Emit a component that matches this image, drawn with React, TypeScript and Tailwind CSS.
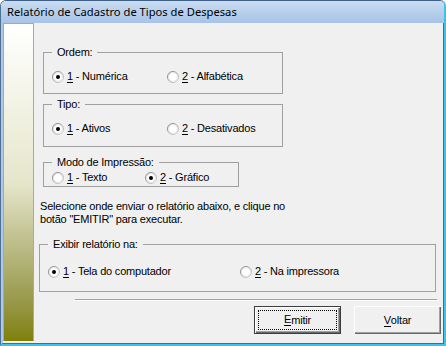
import React from "react";

function Radio({ checked }: { checked?: boolean }) {
  return (
    <svg width="12" height="12" viewBox="0 0 12 12" className="shrink-0">
      <defs>
        <linearGradient id="rg" x1="0" y1="0" x2="1" y2="1">
          <stop offset="0" stopColor="#7a7a7a" />
          <stop offset="1" stopColor="#d8d8d8" />
        </linearGradient>
      </defs>
      <circle cx="6" cy="6" r="5.5" fill="#f4f4f4" stroke="url(#rg)" />
      <circle cx="6" cy="6" r="4.3" fill="#ffffff" stroke="#e4e4e4" strokeWidth="0.8" />
      {checked && <circle cx="6" cy="6" r="2" fill="#000" />}
    </svg>
  );
}

function Opt({ n, label, checked, w }: { n: string; label: string; checked?: boolean; w?: string }) {
  return (
    <div className={`flex items-center h-[13px] ${w ?? ""}`}>
      <Radio checked={checked} />
      <span className="ml-[3px] whitespace-nowrap">
        <u className="no-underline border-b border-black leading-[11px] inline-block">{n}</u>
        {" - " + label}
      </span>
    </div>
  );
}

export default function App() {
  return (
    <div className="w-[446px] h-[346px] flex flex-col overflow-hidden rounded-t-[6px] border-t border-l border-t-[#3d5f86] border-l-[#4f6f95] border-r-2 border-b-2 border-r-[#3ec3e6] border-b-[#3ec3e6] font-['Liberation_Sans',Arial,sans-serif] text-[11px] tracking-[-0.2px] text-black">
      <div className="h-[22px] shrink-0 flex items-center pl-[6px] bg-gradient-to-b from-[#cadcf1] to-[#a7c3e6] font-['Noto_Sans',sans-serif] text-[11.2px] tracking-normal text-black">
        Relatório de Cadastro de Tipos de Despesas
      </div>
      <div className="flex-1 flex bg-[#f0f0f0] border-l-2 border-l-[#aec8e8] border-r border-r-[#646464] border-b border-b-[#646464]">
        <div className="w-[31px] mb-[2px] border-l border-r border-t border-[#a8a8a8] bg-gradient-to-b from-[#ffffff] via-[#e6e6cc] to-[#808000]" />
        <div className="flex-1 flex flex-col">
          <fieldset className="ml-[9px] mt-[23px] w-[240px] border border-[#a0a0a0] pl-[8px] pt-[11px] pb-[10px] flex">
            <legend className="px-[5px] leading-[13px]">Ordem:</legend>
            <Opt n="1" label="Numérica" checked w="w-[115px]" />
            <Opt n="2" label="Alfabética" />
          </fieldset>
          <fieldset className="ml-[9px] mt-[4px] w-[240px] border border-[#a0a0a0] pl-[8px] pt-[11px] pb-[11px] flex">
            <legend className="px-[5px] leading-[13px]">Tipo:</legend>
            <Opt n="1" label="Ativos" checked w="w-[115px]" />
            <Opt n="2" label="Desativados" />
          </fieldset>
          <fieldset className="ml-[9px] mt-[9px] w-[196px] border border-[#a0a0a0] pl-[8px] pt-[2px] pb-[2px] flex">
            <legend className="px-[5px] leading-[13px]">Modo de Impressão:</legend>
            <Opt n="1" label="Texto" w="w-[93px]" />
            <Opt n="2" label="Gráfico" checked />
          </fieldset>
          <p className="ml-[6px] mt-[13px] leading-[13px]">
            Selecione onde enviar o relatório abaixo, e clique no
            <br />
            botão "EMITIR" para executar.
          </p>
          <fieldset className="ml-[5px] mt-[12px] w-[397px] border border-[#a0a0a0] pl-[8px] pt-[14px] pb-[13px] flex">
            <legend className="px-[5px] leading-[13px]">Exibir relatório na:</legend>
            <Opt n="1" label="Tela do computador" checked w="w-[192px]" />
            <Opt n="2" label="Na impressora" />
          </fieldset>
          <div className="ml-[41px] mr-[6px] mt-[7px] h-[2px] border-t border-t-[#a0a0a0] border-b border-b-white" />
          <div className="mt-[5px] flex justify-end gap-[13px] pr-[2px]">
            <button className="w-[87px] h-[28px] border border-[#3c3c3c] bg-[#f0f0f0] shadow-[inset_1px_1px_0_#ffffff,inset_-1px_-1px_0_#696969,inset_-2px_-2px_0_#a0a0a0] p-[3px] flex">
              <span className="flex-1 flex items-center justify-center border border-dotted border-black">
                <u className="no-underline border-b border-black leading-[11px] inline-block">E</u>mitir
              </span>
            </button>
            <button className="w-[87px] h-[28px] bg-[#f0f0f0] shadow-[inset_1px_1px_0_#ffffff,inset_-1px_-1px_0_#696969,inset_-2px_-2px_0_#a0a0a0] flex items-center justify-center">
              <span>
                <u className="no-underline border-b border-black leading-[11px] inline-block">V</u>oltar
              </span>
            </button>
          </div>
        </div>
      </div>
    </div>
  );
}
